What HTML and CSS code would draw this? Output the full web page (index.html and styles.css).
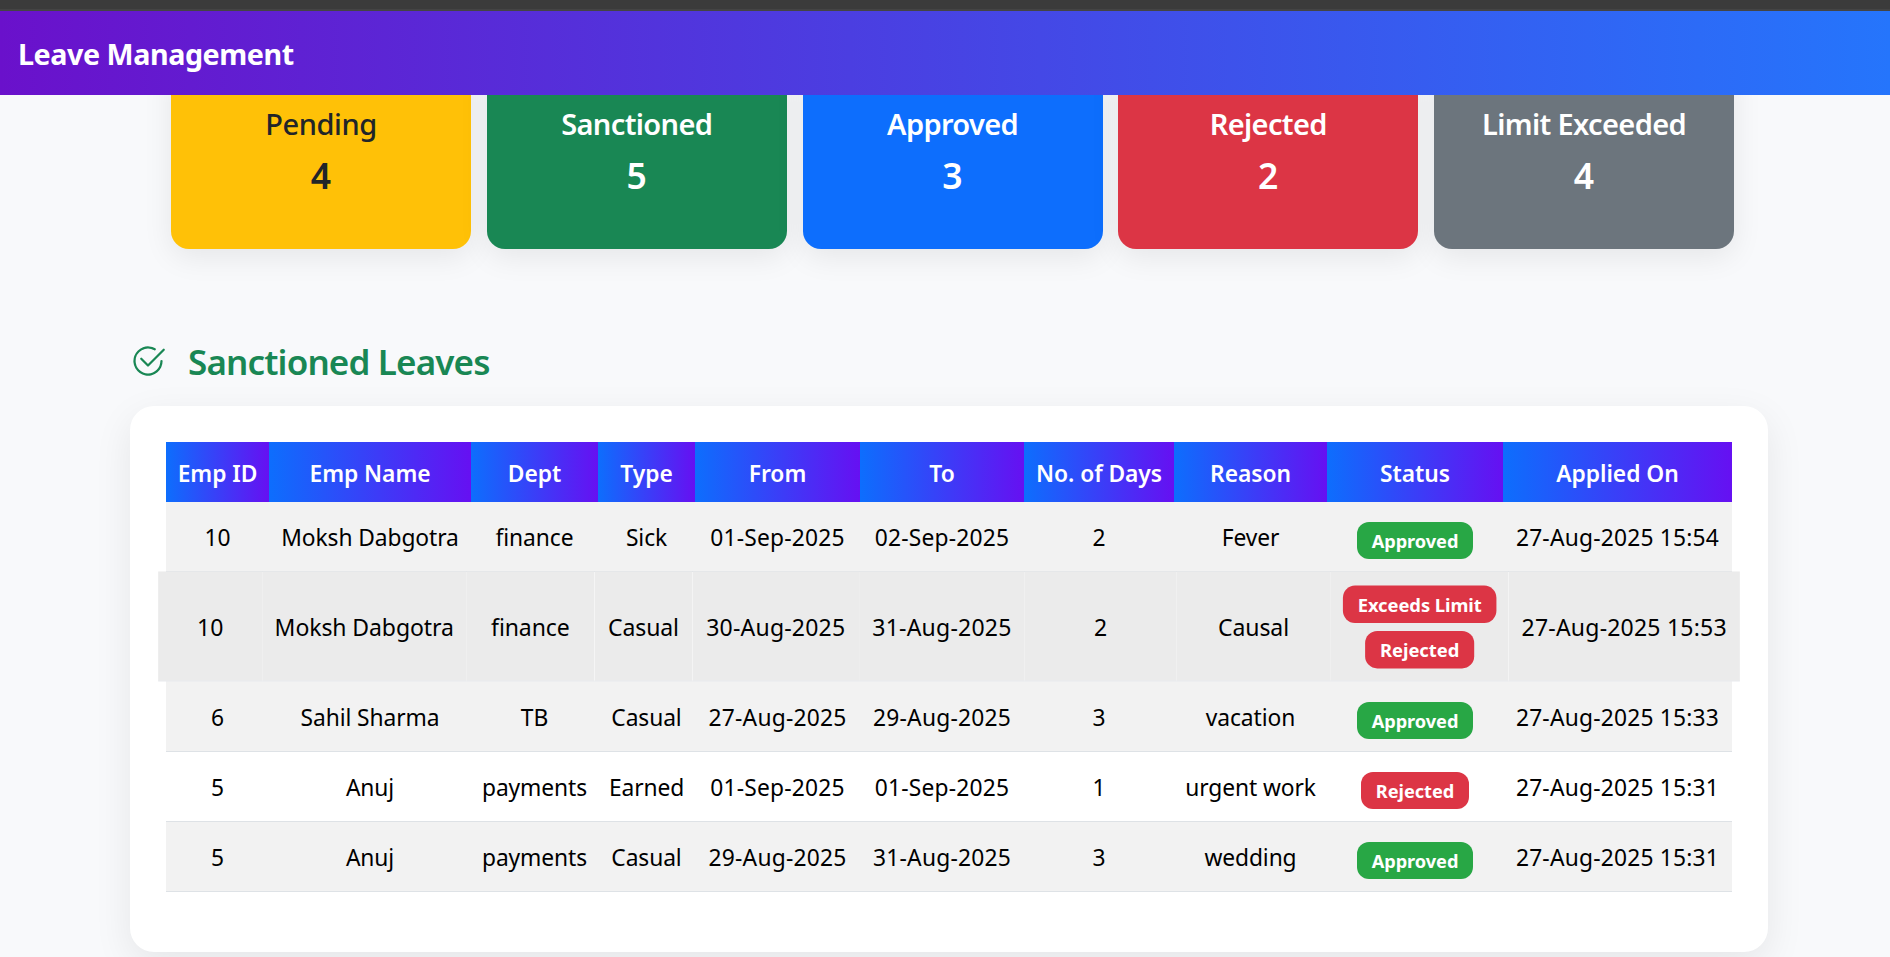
FILE: index.html
```html
<!DOCTYPE html>
<html lang="en">
<head>
<meta charset="utf-8">
<title>Leave Management</title>
<link rel="stylesheet" href="styles.css">
</head>
<body>
<div class="topstrip"></div>
<header class="navbar"><h1 class="brand">Leave Management</h1></header>
<main>
<section class="stats">
<div class="stat pending"><h5>Pending</h5><h3>4</h3></div>
<div class="stat sanctioned"><h5>Sanctioned</h5><h3>5</h3></div>
<div class="stat approved"><h5>Approved</h5><h3>3</h3></div>
<div class="stat rejected"><h5>Rejected</h5><h3>2</h3></div>
<div class="stat exceeded"><h5>Limit Exceeded</h5><h3>4</h3></div>
</section>
<h3 class="section-title">
<svg class="check-icon" viewBox="0 0 16 16" fill="currentColor" aria-hidden="true"><path d="M2.5 8a5.5 5.5 0 0 1 8.25-4.764.5.5 0 0 0 .5-.866A6.5 6.5 0 1 0 14.5 8a.5.5 0 0 0-1 0 5.5 5.5 0 1 1-11 0"/><path d="M15.354 3.354a.5.5 0 0 0-.708-.708L8 9.293 5.354 6.646a.5.5 0 1 0-.708.708l3 3a.5.5 0 0 0 .708 0z"/></svg>
<span>Sanctioned Leaves</span>
</h3>
<section class="panel">
<table class="leaves">
<colgroup><col class="c-id"><col class="c-name"><col class="c-dept"><col class="c-type"><col class="c-from"><col class="c-to"><col class="c-days"><col class="c-reason"><col class="c-status"><col class="c-applied"></colgroup>
<thead><tr><th>Emp ID</th><th>Emp Name</th><th>Dept</th><th>Type</th><th>From</th><th>To</th><th>No. of Days</th><th>Reason</th><th>Status</th><th>Applied On</th></tr></thead>
<tbody>
<tr class="odd"><td>10</td><td>Moksh Dabgotra</td><td>finance</td><td>Sick</td><td class="date">01-Sep-2025</td><td class="date">02-Sep-2025</td><td>2</td><td>Fever</td><td><div class="badges"><span class="badge ok">Approved</span></div></td><td class="date">27-Aug-2025 15:54</td></tr>
<tr class="hovered"><td>10</td><td>Moksh Dabgotra</td><td>finance</td><td>Casual</td><td class="date">30-Aug-2025</td><td class="date">31-Aug-2025</td><td>2</td><td>Causal</td><td><div class="badges double"><span class="badge no">Exceeds Limit</span><span class="badge no">Rejected</span></div></td><td class="date">27-Aug-2025 15:53</td></tr>
<tr class="odd after-hover"><td>6</td><td>Sahil Sharma</td><td>TB</td><td>Casual</td><td class="date">27-Aug-2025</td><td class="date">29-Aug-2025</td><td>3</td><td>vacation</td><td><div class="badges"><span class="badge ok">Approved</span></div></td><td class="date">27-Aug-2025 15:33</td></tr>
<tr><td>5</td><td>Anuj</td><td>payments</td><td>Earned</td><td class="date">01-Sep-2025</td><td class="date">01-Sep-2025</td><td>1</td><td>urgent work</td><td><div class="badges"><span class="badge no">Rejected</span></div></td><td class="date">27-Aug-2025 15:31</td></tr>
<tr class="odd"><td>5</td><td>Anuj</td><td>payments</td><td>Casual</td><td class="date">29-Aug-2025</td><td class="date">31-Aug-2025</td><td>3</td><td>wedding</td><td><div class="badges"><span class="badge ok">Approved</span></div></td><td class="date">27-Aug-2025 15:31</td></tr>
</tbody>
</table>
</section>
</main>
</body>
</html>
```
FILE: styles.css
```css
* { box-sizing: border-box; }
html, body { height: 100%; overflow: hidden; }
body { margin: 0; background: #f8f9fb; color: #212529; font-family: "Segoe UI", "Noto Sans", "Open Sans", sans-serif; }
h1, h3, h5 { margin: 0; }

.topstrip { position: relative; z-index: 2; height: 11px; background: #3b3b3b; border-bottom: 2px solid #444; }
.navbar { position: relative; z-index: 2; height: 84px; padding: 0 18px; display: flex; align-items: center; background: linear-gradient(90deg, #6a11cb, #2575fc); }
.brand { color: #fff; font-size: 28.7px; line-height: 40px; font-weight: 700; letter-spacing: -0.45px; padding-top: 2px; }

/* The stat cards are scrolled partly under the navbar. */
.stats { display: grid; grid-template-columns: repeat(5, 300px); justify-content: space-between; width: 1563px; margin: -34px 0 0 171px; }
.stat { height: 188px; padding-top: 45px; border-radius: 18px; text-align: center; color: #fff; box-shadow: 0 8px 30px rgba(0, 0, 0, 0.08); }
.stat h5 { font-size: 29px; line-height: 36px; font-weight: 600; letter-spacing: -0.65px; }
.stat h3 { font-size: 35.5px; line-height: 44px; font-weight: 600; margin-top: 11px; }
.pending { background: #ffc107; color: #212529; }
.pending h5 { font-weight: 500; letter-spacing: -0.4px; }
.sanctioned { background: #198754; }
.approved { background: #0d6efd; }
.rejected { background: #dc3545; }
.exceeded { background: #6c757d; }

.section-title { display: flex; align-items: center; gap: 22px; height: 44px; margin: 91px 0 0 130px; color: #198754; font-size: 35px; line-height: 44px; font-weight: 600; letter-spacing: -0.85px; }
.check-icon { width: 36px; height: 36px; margin-top: -2px; }

.panel { width: 1638px; height: 546px; margin: 22px 0 0 130px; padding: 36px; background: #fff; border-radius: 24px; box-shadow: 0 12px 38px rgba(0, 0, 0, 0.08); }
.leaves { width: 1566px; table-layout: fixed; border-collapse: separate; border-spacing: 0; text-align: center; color: #000; }
.c-id { width: 103px; }
.c-name { width: 202px; }
.c-dept { width: 127px; }
.c-type { width: 97px; }
.c-from { width: 165px; }
.c-to { width: 164px; }
.c-days { width: 150px; }
.c-reason { width: 153px; }
.c-status { width: 176px; }
.c-applied { width: 229px; }
.leaves th { height: 60px; padding: 4px 0 0; background: linear-gradient(90deg, #0d6efd, #6610f2); color: #fff; font-size: 22.8px; line-height: 32px; font-weight: 600; letter-spacing: -0.05px; white-space: nowrap; }
.leaves td { height: 70px; padding: 3px 0 0; border-bottom: 1px solid #dee2e6; font-size: 22.8px; line-height: 32px; letter-spacing: -0.1px; white-space: nowrap; vertical-align: middle; }
.leaves .date { letter-spacing: 0.2px; }
.odd td { background: #f2f2f2; }
.hovered { transform: scale(1.01); }
.leaves .hovered td { height: 109px; background: #ebebeb; background-clip: padding-box; border-color: #e9ecef; }
.leaves .after-hover td { height: 71px; }

.badges { display: flex; flex-direction: column; align-items: center; gap: 8px; padding-top: 5px; }
.badges.double { padding-top: 0; margin-top: -1px; }
.badge { height: 37px; padding: 1px 15px 0; border-radius: 12px; color: #fff; font-size: 18.2px; line-height: 36px; font-weight: 700; letter-spacing: -0.05px; }
.ok { background: #28a745; }
.no { background: #dc3545; }
```
